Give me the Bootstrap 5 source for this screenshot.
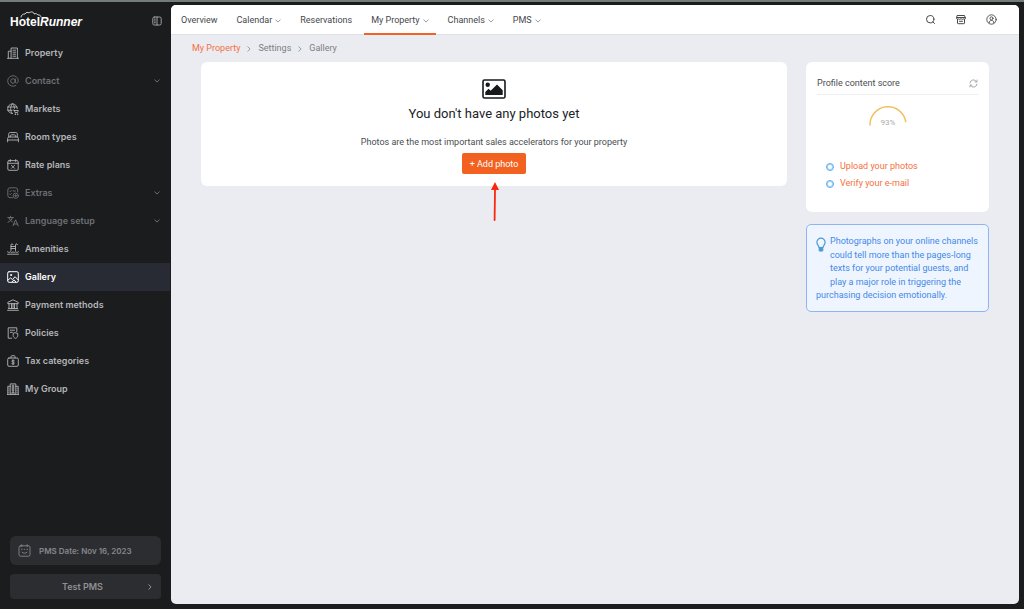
<!DOCTYPE html>
<html lang="en">
<head>
<meta charset="utf-8">
<meta name="viewport" content="width=device-width, initial-scale=1">
<title>HotelRunner - Gallery</title>
<link href="https://cdn.jsdelivr.net/npm/bootstrap@5.3.0/dist/css/bootstrap.min.css" rel="stylesheet">
<style>
  body { font-family: Roboto, "Liberation Sans", sans-serif; font-size: 9px; background: #1b1c1e; color: #4a4d51; border-top: 2px solid #747c79; }
  svg { fill: none; stroke: currentColor; stroke-linecap: round; stroke-linejoin: round; flex: none; }
  a { text-decoration: none; }
  .ico { width: 12px; height: 12px; }
  .chev { width: 6px; height: 6px; }
  .sidebar { width: 170px; flex: none; font-family: Inter, "Liberation Sans", sans-serif; }
  .brand-row { height: 37px; padding: 0 8px 0 10px; }
  .brand { position: relative; color: #fff; font: bold 12px/16px "Liberation Sans", sans-serif; padding-top: 3px; }
  .brand svg { position: absolute; left: 10px; top: 0; width: 22px; height: 7px; }
  .side-link { height: 28px; padding: 0 10px 0 7px; gap: 6px; color: #b3b5b9; font-weight: 600; }
  .side-link.dim { color: #6c6f75; }
  .side-link.active { background: #282b33; color: #fff; }
  .side-foot { padding: 0 9px 10px 10px; gap: 9px; }
  .side-btn { background: #2c2d31; color: #8f9195; border: 0; border-radius: 4px; height: 25px; font-size: 9px; font-weight: 600; padding: 0 8px; }
  .date-btn { height: 29px; font-size: 8px; border-radius: 6px; gap: 8px; color: #85878b; }
  .panel { background: #ebecf1; border-radius: 5px; margin: 3px 5px 5px 1px; }
  .topbar { background: #fff; border-bottom: 1px solid #dfe1e5; padding: 0 22px 0 3px; gap: 5px; height: 30px; border-radius: 5px 5px 0 0; }
  .tab { height: 30px; padding: 2px 7px 0; gap: 3px; color: #45484c; font-weight: 400; border-bottom: 2px solid transparent; border-top: 2px solid transparent; }
  .tab.active { border-bottom-color: #f4602a; }
  .tab svg, .sep { color: #9a9da2; }
  .tools { gap: 20px; }
  .tool-btn { border: 0; background: none; color: #45484c; padding: 0; line-height: 0; }
  .crumbs { padding: 0 21px; gap: 6px; height: 27px; color: #7b7e86; }
  .crumbs a { color: inherit; }
  .crumbs .first, .todo a { color: #f5703f; }
  .content { padding: 0 30px; gap: 19px; }
  .box { background: #fff; border-radius: 6px; }
  .empty { padding: 17px 16px 12px; }
  .empty h1 { font-size: 13px; line-height: 20px; font-weight: 400; color: #202326; margin: 5px 0 11px; }
  .empty p { line-height: 15px; margin: 0 0 3px; }
  .add-btn { background: #f2611f; color: #fff; font-size: 9px; line-height: 13px; padding: 5px 8px 3px; border: 0; border-radius: 2px; }
  .add-btn:hover { background: #d9541a; color: #fff; }
  .pointer { position: absolute; left: 50%; top: 119px; margin-left: -4px; width: 10px; height: 40px; }
  .aside { width: 183px; flex: none; gap: 12px; }
  .score { padding: 13px 11px 20px; }
  .score h2 { font-size: 9px; line-height: 16px; font-weight: 400; margin: 0; }
  .score header { padding-bottom: 3px; border-bottom: 1px solid #eceef0; }
  .gauge { position: relative; width: 40px; height: 36px; margin: 11px auto 16px 51px; }
  .gauge span { position: absolute; left: 0; width: 100%; top: 11px; font-size: 8px; line-height: 12px; text-align: center; color: #a9abaf; }
  .todo { padding: 0 9px; margin: 0; font-size: 9px; line-height: 17px; }
  .todo li { gap: 6px; }
  .dot { width: 8px; height: 8px; border: 1px solid #55acf0; box-shadow: inset 0 0 0 1px #a9d5f8; border-radius: 50%; }
  .tip { background: #eef5ff; border: 1px solid #8db5f6; border-radius: 5px; color: #4489e8; padding: 10px 9px 8px; }
  .tip svg { float: left; width: 10px; height: 50px; margin: 2px 4px 0 0; color: #4b9ad0; }
</style>
</head>
<body class="min-vh-100 d-flex">
<svg width="0" height="0" class="position-absolute" aria-hidden="true">
  <symbol id="down" viewBox="0 0 6 6"><path d="M.7 1.8 3 4.1 5.3 1.8"/></symbol>
  <symbol id="right" viewBox="0 0 6 6"><path d="M1.8.7 4.1 3 1.8 5.3"/></symbol>
</svg>

<aside class="sidebar d-flex flex-column">
  <div class="brand-row d-flex align-items-center justify-content-between">
    <a href="#" class="brand"><svg viewBox="0 0 22 7" stroke-width=".8"><path d="M1 6c0-2 2-3 4-3 1-2 3-2 4-1 2-2 5-1 5 1 2-1 3 0 4 1 2-.5 3 1 3 2"/></svg>Hotel<em>Runner</em></a>
    <button class="tool-btn" aria-label="Collapse menu"><svg width="10" height="10" viewBox="0 0 10 10" color="#a8aaad" stroke-width=".9"><rect x=".8" y="1" width="8.4" height="8" rx="1.5"/><path d="M5 1v8M2.3 3.2h1M2.3 5h1M2.3 6.8h1"/></svg></button>
  </div>
  <nav class="d-flex flex-column" aria-label="Property menu">
    <a href="#" class="side-link d-flex align-items-center"><svg class="ico" viewBox="0 0 12 12" stroke-width=".9"><path d="M.5 11.3h11M1.3 11.3V4.2h2.8M4.1 11.3V1h6.3v10.3M6 3.2h2.6M6 5.2h2.6M6 7.2h2.6M6 9.2h2.6"/></svg>Property</a>
    <a href="#" class="side-link dim d-flex align-items-center"><svg class="ico" viewBox="0 0 12 12" stroke-width=".9"><circle cx="6" cy="6" r="2.3"/><path d="M8.3 3.8v3c0 2 3 1.500 3-.8A5.300 5.300 0 1 0 8.800 10.500"/></svg><span class="me-auto">Contact</span><svg class="chev"><use href="#down"/></svg></a>
    <a href="#" class="side-link d-flex align-items-center"><svg class="ico" viewBox="0 0 12 12" stroke-width=".9"><path d="M5.500 10.500A4.800 4.800 0 1 1 10.300 5.500M.7 4h9M.7 7.300H5M5.500.8C3 3 3 8 5.200 10.500M5.500.8c1.300 1 2 2.700 2 4.500M6.300 7h1l.7 2.600h2.600L11.300 7.500H7.500"/><circle cx="8.200" cy="11.200" r=".3"/><circle cx="10.500" cy="11.200" r=".3"/></svg>Markets</a>
    <a href="#" class="side-link d-flex align-items-center"><svg class="ico" viewBox="0 0 12 12" stroke-width=".9"><path d="M1.700 6V3.200c0-1 .5-1.700 1.500-1.700h5.600c1 0 1.500.7 1.500 1.700V6M3.300 5.800V4.500c0-1 5.400-1 5.400 0v1.300M.6 10.800V7.500C.6 6.500 1.300 6 2 6h8c.8 0 1.400.5 1.400 1.500v3.300M.6 9h10.800"/></svg>Room types</a>
    <a href="#" class="side-link d-flex align-items-center"><svg class="ico" viewBox="0 0 12 12" stroke-width=".9"><rect x=".8" y="1.600" width="10.400" height="9.700" rx="1.300"/><path d="M.8 4.300h10.400M3.300.6v2M8.700.6v2M4.500 6.300l3 3M7.500 6.300l-3 3"/></svg>Rate plans</a>
    <a href="#" class="side-link dim d-flex align-items-center"><svg class="ico" viewBox="0 0 12 12" stroke-width=".9"><path d="M5.500 10.700H3A2.200 2.200 0 0 1 .8 8.500V3A2.200 2.200 0 0 1 3 .8h5.500A2.200 2.200 0 0 1 10.700 3v2M2.500 4l.7.700L4.300 3.500M6 4h2.500M2.500 7l.7.700 1.100-1.200"/><circle cx="8.700" cy="8.700" r="2.600"/><path d="M8.700 7.600v2.200M7.600 8.700h2.200"/></svg><span class="me-auto">Extras</span><svg class="chev"><use href="#down"/></svg></a>
    <a href="#" class="side-link dim d-flex align-items-center"><svg class="ico" viewBox="0 0 12 12" stroke-width="1"><path d="M.8 2.600h5.600M3.600 1.200v1.400M5.300 2.600C5 4.800 3 6.500 1 7.200M2 3c.5 1.800 2 3 3.400 3.700M6 10.800l2.500-6 2.700 6M7 9h3.400"/></svg><span class="me-auto">Language setup</span><svg class="chev"><use href="#down"/></svg></a>
    <a href="#" class="side-link d-flex align-items-center"><svg class="ico" viewBox="0 0 12 12" stroke-width=".9"><path d="M4 7.500V2C4 .5 6 .5 6 1.700M8.500 7.500V2c0-1.500 2-1.500 2-.3M4 3.500h4.500M4 5.500h4.500M.6 8.800c1 .8 1.700.8 2.700 0 1 .8 1.800.8 2.700 0 1 .8 1.800.8 2.700 0 1 .8 1.700.8 2.700 0M.6 11.200h10.800"/></svg>Amenities</a>
    <a href="#" class="side-link active d-flex align-items-center" aria-current="page"><svg class="ico" viewBox="0 0 12 12" stroke-width="1"><rect x=".7" y=".7" width="10.600" height="10.600" rx="1.400"/><circle cx="4" cy="4" r=".6"/><path d="M.9 9.200 3.500 7l2 1.500L8 5.700l3.200 3.200M5 11l2-2.200 2 2.300"/></svg>Gallery</a>
    <a href="#" class="side-link d-flex align-items-center"><svg class="ico" viewBox="0 0 12 12" stroke-width=".9"><path d="M.8 4.300v-1L6 .8l5.200 2.500v1zM2 4.500v5M4.500 4.500v5M6 4.500v5M7.500 4.500v5M10 4.500v5M1.300 9.500h9.400M.6 11.300h10.800"/></svg>Payment methods</a>
    <a href="#" class="side-link d-flex align-items-center"><svg class="ico" viewBox="0 0 12 12" stroke-width=".9"><path d="M4.700 11.200H1.200V.8h8.600v4M3.300 3.200h4.200M3.300 5.300h2"/><path d="m8.500 5.800 2.300.8v2c0 1.300-1 2.200-2.300 2.800-1.300-.6-2.300-1.500-2.300-2.800v-2z"/></svg>Policies</a>
    <a href="#" class="side-link d-flex align-items-center"><svg class="ico" viewBox="0 0 12 12" stroke-width=".9"><rect x=".7" y="3" width="10.600" height="8.300" rx="1.300"/><path d="M4 3V1.500C4 1 4.300.7 4.800.7h2.400c.5 0 .8.300.8.800V3M7.300 5.700c-.8-.7-2.500-.5-2.500.4 0 1.200 2.600.8 2.600 2 0 1-1.800 1.200-2.700.4M6 4.700v4.900"/></svg>Tax categories</a>
    <a href="#" class="side-link d-flex align-items-center"><svg class="ico" viewBox="0 0 12 12" stroke-width=".9"><path d="M.3 11.400h11.400M.8 11.400V3.300h2.400M11.200 11.400V3.300H8.800M3.200 11.400V.9h5.600v10.500M5 3h2M5 5h2M5 7h2M6 2v7M5 11.400V9.200h2v2.200M1.900 5.200v.2M1.900 7.200v.2M1.900 9.200v.2M10.100 5.200v.2M10.100 7.200v.2M10.100 9.200v.2"/></svg>My Group</a>
  </nav>
  <div class="side-foot d-flex flex-column mt-auto">
    <button class="side-btn date-btn d-flex align-items-center"><svg width="13" height="13" viewBox="0 0 13 13" stroke-width=".9"><rect x="1" y="1.800" width="11" height="10.400" rx="1.500"/><path d="M3.800.7v2M9.200.7v2M3.500 5.300h.6M6.200 5.300h.6M9 5.300h.6M4 8.200c1.500 1.500 3.500 1.500 5 0"/></svg>PMS Date: Nov 16, 2023</button>
    <button class="side-btn d-flex align-items-center"><span class="flex-fill">Test PMS</span><svg class="chev"><use href="#right"/></svg></button>
  </div>
</aside>

<div class="panel flex-fill d-flex flex-column">
  <nav class="topbar d-flex align-items-center" aria-label="Main">
    <a href="#" class="tab d-flex align-items-center">Overview</a>
    <a href="#" class="tab d-flex align-items-center">Calendar <svg class="chev"><use href="#down"/></svg></a>
    <a href="#" class="tab d-flex align-items-center">Reservations</a>
    <a href="#" class="tab active d-flex align-items-center">My Property <svg class="chev"><use href="#down"/></svg></a>
    <a href="#" class="tab d-flex align-items-center">Channels <svg class="chev"><use href="#down"/></svg></a>
    <a href="#" class="tab d-flex align-items-center">PMS <svg class="chev"><use href="#down"/></svg></a>
    <div class="tools d-flex ms-auto">
      <button class="tool-btn" aria-label="Search"><svg width="11" height="11" viewBox="0 0 11 11"><circle cx="5.200" cy="5.200" r="3.700"/><path d="m8 8 1.500 1.500"/></svg></button>
      <button class="tool-btn" aria-label="Store"><svg width="10" height="11" viewBox="0 0 10 11"><path d="M1.500 1.500h7l.8 2.300v.9c0 .8-1.500.8-1.500 0 0 .8-1.800.8-2.800 0-1 .8-2.800.8-2.800 0 0 .8-1.500.8-1.500 0v-.9zM.8 3.500h8.400M1.500 5.500V9c0 .5.300.7.700.7h5.600c.4 0 .7-.2.700-.7V5.500M3.500 7.300h3"/></svg></button>
      <button class="tool-btn" aria-label="Account"><svg width="11" height="11" viewBox="0 0 11 11" stroke-width=".9"><circle cx="5.500" cy="5.500" r="4.700"/><circle cx="5.500" cy="4.300" r="1.500"/><path d="M3.300 8.800V8c0-1 .8-1.500 2.200-1.500s2.200.5 2.200 1.500v.8"/></svg></button>
    </div>
  </nav>
  <nav class="crumbs d-flex align-items-center" aria-label="Breadcrumb">
    <a href="#" class="first">My Property</a><svg class="chev sep"><use href="#right"/></svg>
    <a href="#">Settings</a><svg class="chev sep"><use href="#right"/></svg>
    <span>Gallery</span>
  </nav>
  <main class="content d-flex align-items-start">
    <section class="box empty position-relative flex-fill text-center">
      <svg class="d-block mx-auto" width="24" height="20" viewBox="0 0 24 20" color="#17191b"><rect x="1" y="1" width="22" height="18" rx="1.500" stroke-width="1.600"/><circle cx="5.700" cy="5.800" r="2.200" fill="currentColor" stroke="none"/><path fill="currentColor" stroke="none" d="M3.300 16v-3l3.200-3.200 2.200 2L15 5.500l5.700 5.700V16z"/></svg>
      <h1>You don't have any photos yet</h1>
      <p>Photos are the most important sales accelerators for your property</p>
      <button class="btn add-btn">+ Add photo</button>
      <svg class="pointer" viewBox="0 0 10 40" color="#f9280f"><path d="M5 9 4.600 39" stroke-width="1.800"/><path d="M5 1 1 9h8z" fill="currentColor" stroke="none"/></svg>
    </section>
    <div class="aside d-flex flex-column">
      <section class="box score">
        <header class="d-flex align-items-center justify-content-between"><h2>Profile content score</h2>
          <button class="tool-btn" aria-label="Refresh"><svg width="9" height="9" viewBox="0 0 9 9" color="#9fa2a6" stroke-width=".9"><path d="M1 4a3.500 3.500 0 0 1 6.500-1.400M8 1v1.900H6.100M8 5a3.500 3.500 0 0 1-6.500 1.400M1 8V6.100h1.900"/></svg></button></header>
        <div class="gauge"><svg width="40" height="36" viewBox="0 0 40 36" color="#f2bf5e" stroke-width="1.500"><path d="M2 19A18 18 0 0 1 37.700 15.500"/></svg><span>93%</span></div>
        <ul class="todo list-unstyled">
          <li class="d-flex align-items-center"><span class="dot"></span><a href="#">Upload your photos</a></li>
          <li class="d-flex align-items-center"><span class="dot"></span><a href="#">Verify your e-mail</a></li>
        </ul>
      </section>
      <section class="tip"><svg viewBox="0 0 10 50"><path d="M3 10.500C3 8.500.9 8 .9 5.300a4.100 4.100 0 0 1 8.200 0c0 2.700-2.100 3.200-2.100 5.200z" stroke-width="1.200"/><path d="M3.200 11v3h3.600v-3z" fill="currentColor"/></svg>Photographs on your online channels could tell more than the pages-long texts for your potential guests, and play a major role in triggering the purchasing decision emotionally.</section>
    </div>
  </main>
</div>
<script src="https://cdn.jsdelivr.net/npm/bootstrap@5.3.0/dist/js/bootstrap.bundle.min.js"></script>
</body>
</html>
